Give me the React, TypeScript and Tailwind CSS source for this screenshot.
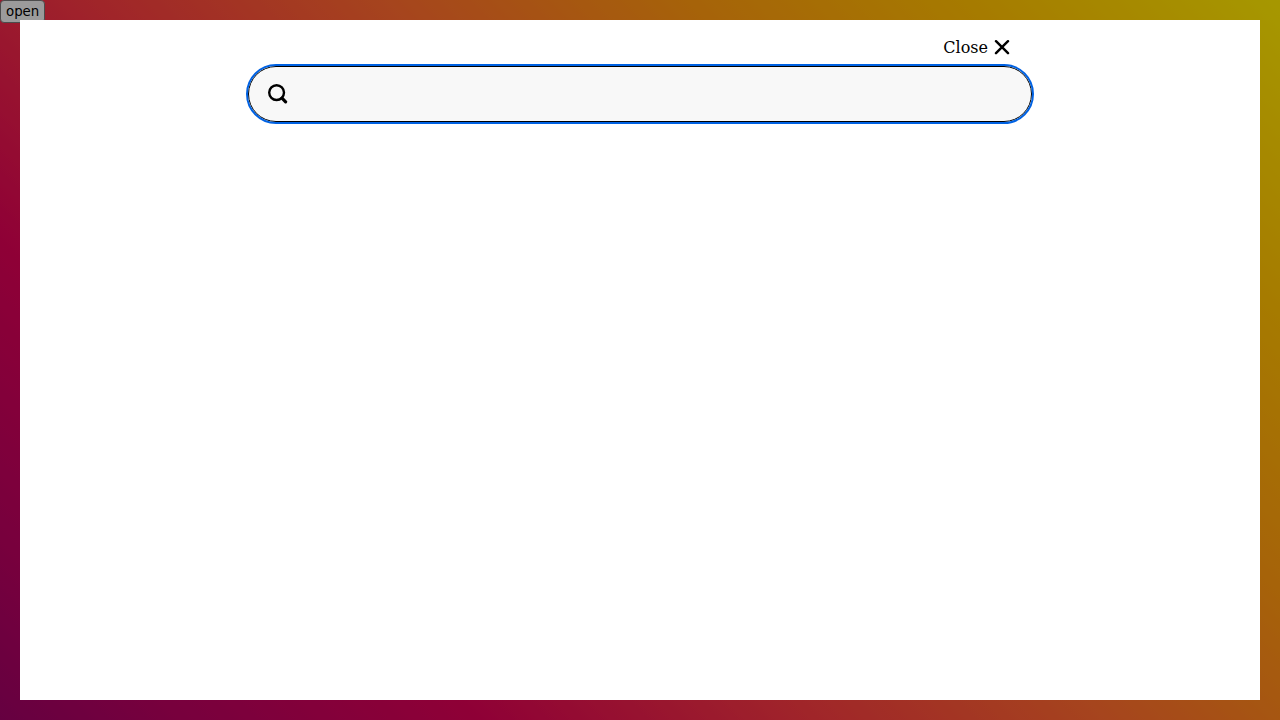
import React from "react";

function SearchIcon() {
  return (
    <svg viewBox="0 0 20 20" className="size-5 shrink-0" fill="none" stroke="black" aria-hidden="true">
      <circle cx="8.6" cy="8.6" r="7.4" strokeWidth="2.4" />
      <path d="M14 14.2 17.6 17.8" strokeWidth="3.2" strokeLinecap="round" />
    </svg>
  );
}

function CloseIcon() {
  return (
    <svg viewBox="0 0 16 16" className="size-4 shrink-0" fill="none" stroke="black" aria-hidden="true">
      <path d="M2 1.2 14 13.2M14 1.2 2 13.2" strokeWidth="2.4" strokeLinecap="round" />
    </svg>
  );
}

export default function App() {
  return (
    <div className="min-h-screen bg-[linear-gradient(45deg,hsl(240_100%_20%)_0%,hsl(289_100%_21%)_11%,hsl(315_100%_27%)_22%,hsl(329_100%_36%)_33%,hsl(337_100%_43%)_44%,hsl(357_91%_59%)_56%,hsl(17_100%_59%)_67%,hsl(34_100%_53%)_78%,hsl(45_100%_50%)_89%,hsl(55_100%_50%)_100%)] bg-[length:100%_200%] bg-top text-black">
      <button
        type="button"
        className="block rounded-sm border border-[#767676] bg-[#efefef] px-[5px] py-0.5 font-['DejaVu_Sans',sans-serif] text-[length:smaller] leading-[17px]"
      >
        open
      </button>

      <div className="fixed inset-0 flex bg-black/35 p-5">
        <div role="dialog" aria-modal="true" aria-label="Search" className="flex-1 bg-white px-4 pt-4">
          <form role="search" className="mx-auto flex max-w-[784px] flex-col gap-1.5">
            <button
              type="button"
              className="mr-[22px] flex items-center gap-1.5 self-end font-['DejaVu_Serif',serif] text-base leading-6"
            >
              Close
              <CloseIcon />
            </button>
            <label className="flex h-14 items-center gap-3 rounded-full border border-black bg-[#f8f8f8] px-[19px] outline-2 outline-[#0062e3]">
              <SearchIcon />
              <input
                type="search"
                aria-label="Search"
                className="min-w-0 flex-1 bg-transparent font-['DejaVu_Sans',sans-serif] text-base outline-none"
              />
            </label>
          </form>
        </div>
      </div>
    </div>
  );
}
